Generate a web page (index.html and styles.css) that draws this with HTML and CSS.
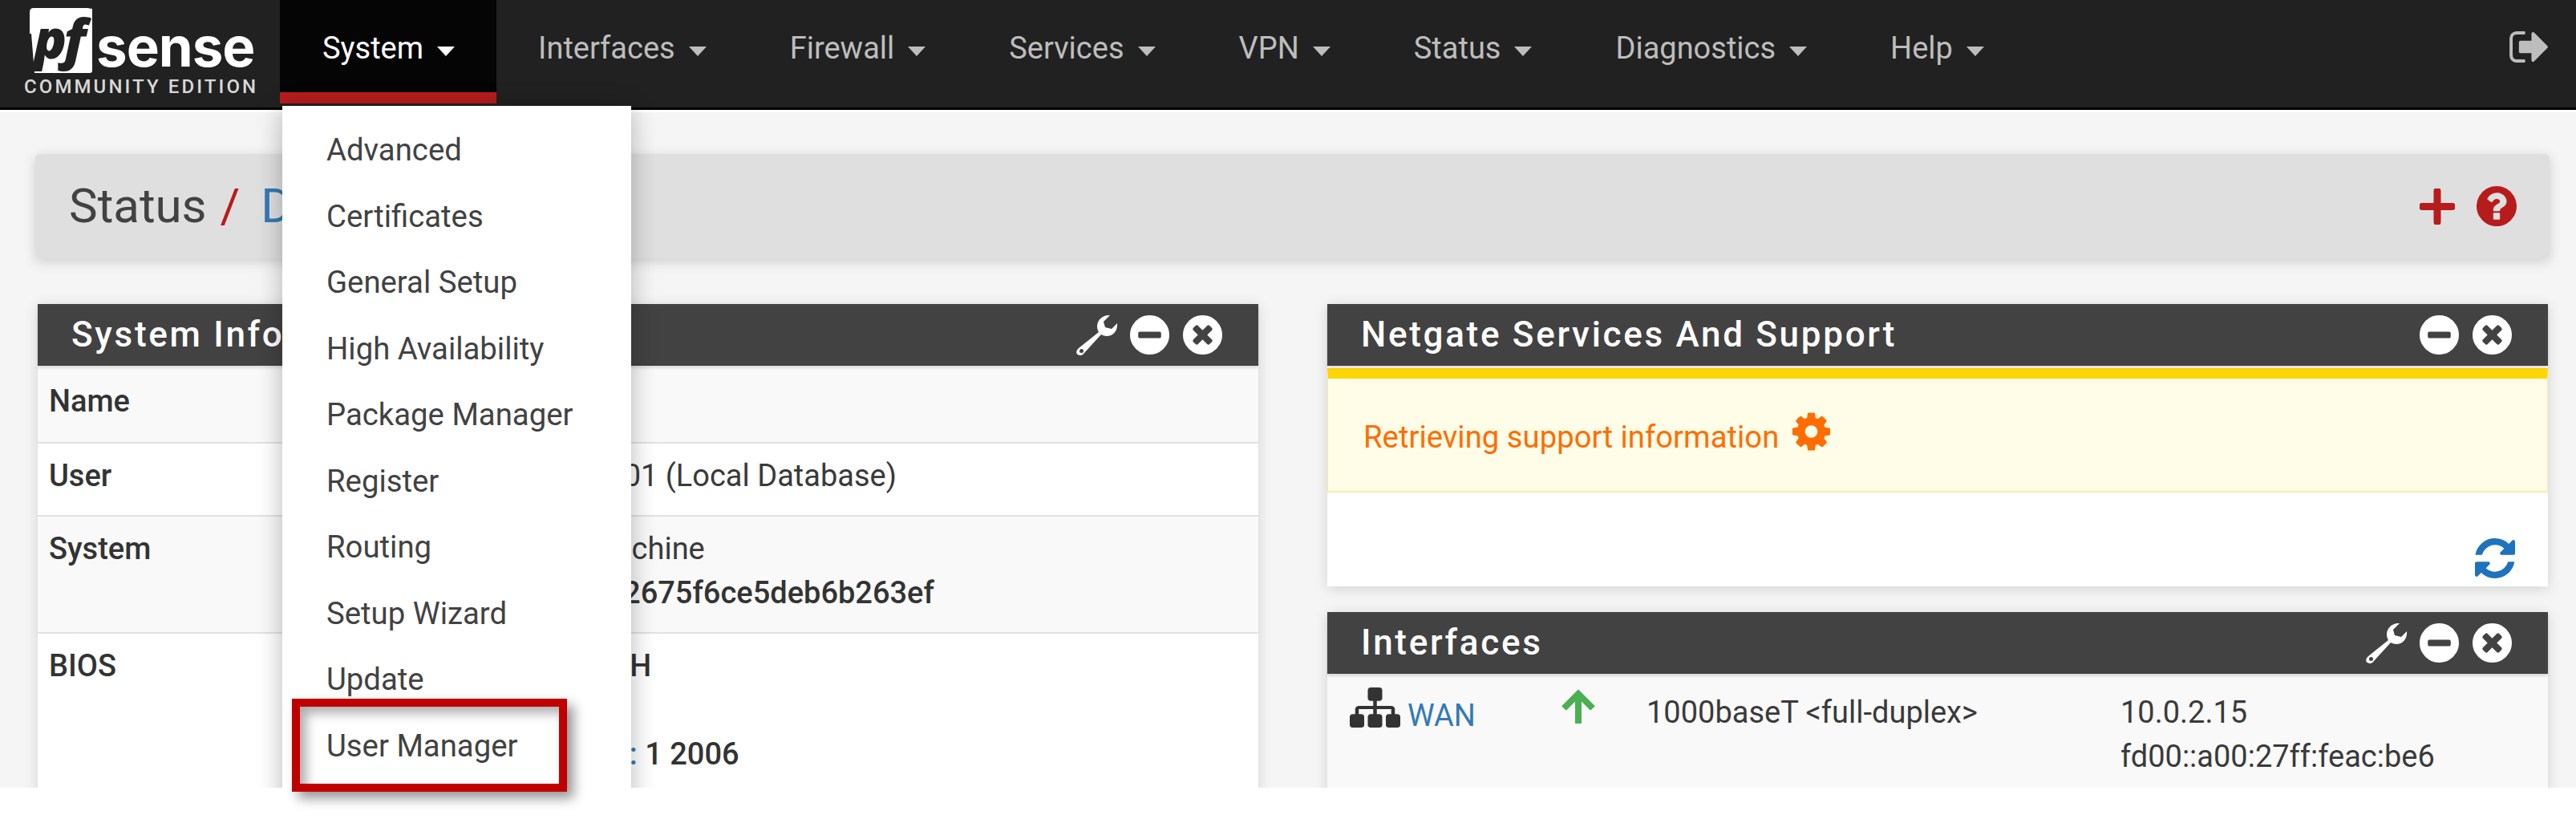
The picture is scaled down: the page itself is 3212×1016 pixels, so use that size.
FILE: index.html
```html
<!DOCTYPE html>
<html lang="en">
<head>
<meta charset="utf-8">
<title>pfSense - Status: Dashboard</title>
<link rel="stylesheet" href="styles.css">
</head>
<body>
<div class="root">
  <div class="page">
    <nav class="nav">
      <a class="logo">
        <svg class="logo-mark" viewBox="0 0 80 82" aria-hidden="true">
          <path class="logo-box" d="M5 0H72L78 1V78Q78 81 75 81H6L2 32H0V5Q0 0 5 0Z"/>
          <text class="logo-pf" x="5" y="63">pf</text>
        </svg>
        <span class="logo-word">sense</span>
        <span class="logo-ed">COMMUNITY EDITION</span>
      </a>
      <ul class="menu">
        <li class="menu-item active">System<i class="caret"></i></li>
        <li class="menu-item">Interfaces<i class="caret"></i></li>
        <li class="menu-item">Firewall<i class="caret"></i></li>
        <li class="menu-item">Services<i class="caret"></i></li>
        <li class="menu-item">VPN<i class="caret"></i></li>
        <li class="menu-item">Status<i class="caret"></i></li>
        <li class="menu-item">Diagnostics<i class="caret"></i></li>
        <li class="menu-item">Help<i class="caret"></i></li>
      </ul>
      <svg class="logout" viewBox="64 256 1632 1280" aria-hidden="true"><path d="M704 1440q0 4 1 20t.5 26.5-3 23.5-10 19.5-20.5 6.5h-320q-119 0-203.5-84.5t-84.5-203.5v-704q0-119 84.5-203.5t203.5-84.5h320q13 0 22.5 9.5t9.5 22.5q0 4 1 20t.5 26.5-3 23.5-10 19.5-20.5 6.5h-320q-66 0-113 47t-47 113v704q0 66 47 113t113 47h312l11.5 1 11.5 3 8 5.5 7 9 2 13.5zm928-544q0 26-19 45l-544 544q-19 19-45 19t-45-19-19-45v-288h-448q-26 0-45-19t-19-45v-384q0-26 19-45t45-19h448v-288q0-26 19-45t45-19 45 19l544 544q19 19 19 45z"/></svg>
    </nav>

    <main class="main">
      <header class="crumbs">
        <h1 class="crumb-title">Status<span class="crumb-sep">/</span><a class="crumb-link">Dashboard</a></h1>
        <div class="crumb-actions">
          <svg class="ico-plus" viewBox="0 0 44 45" aria-hidden="true"><path d="M22 3V42M3 22.5H41"/></svg>
          <svg class="ico-help" viewBox="128 128 1536 1536" aria-hidden="true"><path d="M1024 1376v-192q0-14-9-23t-23-9h-192q-14 0-23 9t-9 23v192q0 14 9 23t23 9h192q14 0 23-9t9-23zm256-672q0-88-55.5-163t-138.5-116-170-41q-243 0-371 213-15 24 8 42l132 100q7 6 19 6 16 0 25-12 53-68 86-92 34-24 86-24 48 0 85.5 26t37.5 59q0 38-20 61t-68 45q-63 28-115.5 86.5t-52.5 125.5v36q0 14 9 23t23 9h192q14 0 23-9t9-23q0-19 21.5-49.5t54.5-49.5q32-18 49-28.5t46-35 44.5-48 28-60.5 12.5-81zm384 192q0 209-103 385.5t-279.5 279.5-385.5 103-385.5-103-279.5-279.5-103-385.5 103-385.5 279.5-279.5 385.5-103 385.5 103 279.5 279.5 103 385.5z"/></svg>
        </div>
      </header>

      <div class="columns">
        <section class="panel">
          <div class="panel-head">
            <h2 class="panel-title">System Information</h2>
            <svg class="ico-wrench" viewBox="0 0 52 52" aria-hidden="true"><path class="wrench-shape" d="M42 1C33 0 26 7 26 15C26 18 27 20 28 22L3 42C-1 46 0 49 2 50C5 52 8 51 10 48L31 25C33 26 36 27 38 27C46 27 52 20 51 11L44 18L36 16L34 9Z"/><circle class="wrench-hole" cx="6.500" cy="45.500" r="2.500"/></svg>
            <svg class="ico-head" viewBox="128 128 1536 1536" aria-hidden="true"><path d="M1344 960v-128q0-26-19-45t-45-19h-768q-26 0-45 19t-19 45v128q0 26 19 45t45 19h768q26 0 45-19t19-45zm320-64q0 209-103 385.500t-279.500 279.500-385.500 103-385.500-103-279.500-279.500-103-385.500 103-385.500 279.500-279.500 385.500-103 385.500 103 279.500 279.500 103 385.500z"/></svg>
            <svg class="ico-head" viewBox="128 128 1536 1536" aria-hidden="true"><path d="M1277 1122q0-26-19-45l-181-181 181-181q19-19 19-45 0-27-19-46l-90-90q-19-19-46-19-26 0-45 19l-181 181-181-181q-19-19-45-19-27 0-46 19l-90 90q-19 19-19 46 0 26 19 45l181 181-181 181q-19 19-19 45 0 27 19 46l90 90q19 19 46 19 26 0 45-19l181-181 181 181q19 19 45 19 27 0 46-19l90-90q19-19 19-46zm387-226q0 209-103 385.500t-279.500 279.500-385.500 103-385.500-103-279.500-279.500-103-385.500 103-385.500 279.500-279.500 385.500-103 385.500 103 279.500 279.500 103 385.500z"/></svg>
          </div>
          <table class="info">
            <tr><th>Name</th><td>pfSense.home.arpa</td></tr>
            <tr><th>User</th><td>admin@192.168.1.101 (Local Database)</td></tr>
            <tr><th>System</th><td><span class="tuck">VirtualBox</span> Virtual Machine<br>Netgate Device ID: <b>a2675f6ce5deb6b263ef</b></td></tr>
            <tr><th>BIOS</th><td><span class="tuck">Vendor:</span> <b>innotek GmbH</b><br>Version: <b>VirtualBox</b><br><span class="tuck-wide">Release Date:</span> <b>Fri Dec<span class="info-link">:</span> 1 2006</b></td></tr>
          </table>
        </section>

        <div class="stack">
          <section class="panel">
            <div class="panel-head">
              <h2 class="panel-title">Netgate Services And Support</h2>
              <svg class="ico-head" viewBox="128 128 1536 1536" aria-hidden="true"><path d="M1344 960v-128q0-26-19-45t-45-19h-768q-26 0-45 19t-19 45v128q0 26 19 45t45 19h768q26 0 45-19t19-45zm320-64q0 209-103 385.500t-279.500 279.500-385.500 103-385.500-103-279.500-279.500-103-385.500 103-385.500 279.500-279.500 385.500-103 385.500 103 279.500 279.500 103 385.500z"/></svg>
              <svg class="ico-head" viewBox="128 128 1536 1536" aria-hidden="true"><path d="M1277 1122q0-26-19-45l-181-181 181-181q19-19 19-45 0-27-19-46l-90-90q-19-19-46-19-26 0-45 19l-181 181-181-181q-19-19-45-19-27 0-46 19l-90 90q-19 19-19 46 0 26 19 45l181 181-181 181q-19 19-19 45 0 27 19 46l90 90q19 19 46 19 26 0 45-19l181-181 181 181q19 19 45 19 27 0 46-19l90-90q19-19 19-46zm387-226q0 209-103 385.500t-279.500 279.500-385.500 103-385.500-103-279.500-279.500-103-385.500 103-385.500 279.500-279.500 385.500-103 385.500 103 279.500 279.500 103 385.500z"/></svg>
            </div>
            <div class="alert">
              <span class="alert-text">Retrieving support information</span>
              <svg class="ico-gear" viewBox="128 128 1536 1536" aria-hidden="true"><path d="M1152 896q0-106-75-181t-181-75-181 75-75 181 75 181 181 75 181-75 75-181zm512-109v222q0 12-8 23t-20 13l-185 28q-19 54-39 91 35 50 107 138 10 12 10 25t-9 23q-27 37-99 108t-94 71q-12 0-26-9l-138-108q-44 23-91 38-16 136-29 186-7 28-36 28h-222q-14 0-24.500-8.500t-11.500-21.500l-28-184q-49-16-90-37l-141 107q-10 9-25 9-14 0-25-11-126-114-165-168-7-10-7-23 0-12 8-23 15-21 51-66.500t54-70.500q-27-50-41-99l-183-27q-13-2-21-12.500t-8-23.500v-222q0-12 8-23t19-13l186-28q14-46 39-92-40-57-107-138-10-12-10-24 0-10 9-23 26-36 98.500-107.500t94.500-71.500q13 0 26 10l138 107q44-23 91-38 16-136 29-186 7-28 36-28h222q14 0 24.500 8.500t11.500 21.500l28 184q49 16 90 37l142-107q9-9 24-9 13 0 25 10 129 119 165 170 7 8 7 22 0 12-8 23-15 21-51 66.500t-54 70.500q26 50 41 98l183 28q13 2 21 12.500t8 23.500z"/></svg>
            </div>
            <div class="panel-foot">
              <svg class="ico-refresh" viewBox="128 128 1536 1536" aria-hidden="true"><path d="M1639 1056q0 5-1 7-64 268-268 434.500t-478 166.500q-146 0-282.500-55t-243.500-157l-129 129q-19 19-45 19t-45-19-19-45v-448q0-26 19-45t45-19h448q26 0 45 19t19 45-19 45l-137 137q71 66 161 102t187 36q134 0 250-65t186-179q11-17 53-117 8-23 30-23h192q13 0 22.500 9.500t9.500 22.500zm25-800v448q0 26-19 45t-45 19h-448q-26 0-45-19t-19-45 19-45l138-138q-148-137-349-137-134 0-250 65t-186 179q-11 17-53 117-8 23-30 23h-199q-13 0-22.500-9.500t-9.500-22.500v-7q65-268 270-434.500t480-166.500q146 0 284 55.500t245 156.500l130-129q19-19 45-19t45 19 19 45z"/></svg>
            </div>
          </section>

          <section class="panel panel-fill">
            <div class="panel-head">
              <h2 class="panel-title">Interfaces</h2>
              <svg class="ico-wrench" viewBox="0 0 52 52" aria-hidden="true"><path class="wrench-shape" d="M42 1C33 0 26 7 26 15C26 18 27 20 28 22L3 42C-1 46 0 49 2 50C5 52 8 51 10 48L31 25C33 26 36 27 38 27C46 27 52 20 51 11L44 18L36 16L34 9Z"/><circle class="wrench-hole" cx="6.500" cy="45.500" r="2.500"/></svg>
              <svg class="ico-head" viewBox="128 128 1536 1536" aria-hidden="true"><path d="M1344 960v-128q0-26-19-45t-45-19h-768q-26 0-45 19t-19 45v128q0 26 19 45t45 19h768q26 0 45-19t19-45zm320-64q0 209-103 385.500t-279.500 279.500-385.500 103-385.500-103-279.500-279.500-103-385.500 103-385.500 279.500-279.500 385.500-103 385.500 103 279.500 279.500 103 385.500z"/></svg>
              <svg class="ico-head" viewBox="128 128 1536 1536" aria-hidden="true"><path d="M1277 1122q0-26-19-45l-181-181 181-181q19-19 19-45 0-27-19-46l-90-90q-19-19-46-19-26 0-45 19l-181 181-181-181q-19-19-45-19-27 0-46 19l-90 90q-19 19-19 46 0 26 19 45l181 181-181 181q-19 19-19 45 0 27 19 46l90 90q19 19 46 19 26 0 45-19l181-181 181 181q19 19 45 19 27 0 46-19l90-90q19-19 19-46zm387-226q0 209-103 385.500t-279.500 279.500-385.500 103-385.500-103-279.500-279.500-103-385.500 103-385.500 279.500-279.500 385.500-103 385.500 103 279.500 279.500 103 385.500z"/></svg>
            </div>
            <div class="if-row">
              <div class="if-name">
                <svg class="ico-sitemap" viewBox="0 128 1792 1536" preserveAspectRatio="none" aria-hidden="true"><path d="M1792 1248v320q0 40-28 68t-68 28h-320q-40 0-68-28t-28-68v-320q0-40 28-68t68-28h96v-192h-512v192h96q40 0 68 28t28 68v320q0 40-28 68t-68 28h-320q-40 0-68-28t-28-68v-320q0-40 28-68t68-28h96v-192h-512v192h96q40 0 68 28t28 68v320q0 40-28 68t-68 28h-320q-40 0-68-28t-28-68v-320q0-40 28-68t68-28h96v-192q0-52 38-90t90-38h512v-192h-96q-40 0-68-28t-28-68v-320q0-40 28-68t68-28h320q40 0 68 28t28 68v320q0 40-28 68t-68 28h-96v192h512q52 0 90 38t38 90v192h96q40 0 68 28t28 68z"/></svg>
                <a class="if-link">WAN</a>
              </div>
              <svg class="ico-up" viewBox="0 0 44 45" aria-hidden="true"><path d="M22 42V5M4 23L22 5L40 23"/></svg>
              <div class="if-media">1000baseT &lt;full-duplex&gt;</div>
              <div class="if-addr">10.0.2.15<br>fd00::a00:27ff:feac:be6</div>
            </div>
          </section>
        </div>
      </div>
    </main>

    <ul class="dropdown">
      <li>Advanced</li>
      <li>Certificates</li>
      <li>General Setup</li>
      <li>High Availability</li>
      <li>Package Manager</li>
      <li>Register</li>
      <li>Routing</li>
      <li>Setup Wizard</li>
      <li>Update</li>
      <li>User Manager</li>
    </ul>
  </div>
  <div class="callout"></div>
</div>
</body>
</html>
```
FILE: styles.css
```css
* { box-sizing: border-box; }
html, body { margin: 0; padding: 0; background: #fff; }
body { font-family: Roboto, "Liberation Sans", sans-serif; font-size: 38px; line-height: 55px; color: #3a3a3a; }
ul { list-style: none; margin: 0; padding: 0; }
h1, h2 { margin: 0; font-weight: 400; }
svg { display: block; flex: none; }

.root { position: relative; width: 3212px; height: 1016px; overflow: hidden; background: #fff; }
.page { position: relative; height: 982px; overflow: hidden; background: #f5f5f5; }

/* top bar */
.nav { display: flex; align-items: flex-start; height: 140px; background: #212121; border-bottom: 3px solid #fff; box-shadow: inset 0 -3px 0 #000; }
.logo { position: relative; flex: none; width: 349px; height: 134px; }
.logo-mark { position: absolute; left: 37px; top: 10px; width: 80px; height: 82px; }
.logo-box { fill: #fff; }
.logo-pf { font-family: "Open Sans", sans-serif; font-weight: 800; font-style: italic; font-size: 68px; fill: #212121; letter-spacing: -4px; }
.logo-word { position: absolute; left: 120px; top: 18px; font-family: Inter, sans-serif; font-weight: 700; font-size: 69px; line-height: 80px; color: #fff; letter-spacing: -1px; }
.logo-ed { position: absolute; left: 30px; top: 93px; font-family: Roboto, sans-serif; font-weight: 500; font-size: 24px; line-height: 30px; color: #d8d8d8; letter-spacing: 3.1px; white-space: nowrap; }

.menu { display: flex; height: 129px; }
.menu-item { display: flex; align-items: flex-start; height: 129px; padding: 33px 52px 0; color: #bdbdbd; border-bottom: 14px solid transparent; white-space: nowrap; }
.menu-item.active { padding: 33px 52px 0 53px; color: #fff; background: #050505; border-bottom-color: #b71c1c; }
.caret { width: 0; height: 0; margin: 25px 0 0 17px; border-left: 11px solid transparent; border-right: 11px solid transparent; border-top: 12px solid currentColor; }
.logout { width: 52px; height: 39px; margin: 39px 32px 0 auto; fill: #bdbdbd; }

/* breadcrumb bar */
.main { padding: 52px 33px 0 44px; }
.crumbs { display: flex; align-items: center; justify-content: space-between; height: 130px; padding: 0 41px 0 42px; background: #dfdfdf; border-radius: 5px; box-shadow: 0 4px 16px rgba(0, 0, 0, .16); }
.crumb-title { font-size: 60px; line-height: 70px; color: #424242; }
.crumb-sep { margin: 0 26px 0 17px; color: #b71c1c; }
.crumb-link { color: #337ab7; }
.crumb-actions { display: flex; align-items: center; gap: 27px; }
.ico-plus { width: 44px; height: 45px; fill: none; stroke: #b71c1c; stroke-width: 9; stroke-linecap: round; }
.ico-help { width: 50px; height: 50px; fill: #b71c1c; }

/* panels */
.columns { display: grid; grid-template-columns: 1522px 1522px; gap: 86px; margin: 57px 0 0 3px; }
.stack { display: flex; flex-direction: column; gap: 32px; }
.panel { background: #fff; box-shadow: 0 3px 16px rgba(0, 0, 0, .14); }
.panel-head { position: relative; display: flex; align-items: center; gap: 17px; height: 77px; padding: 0 45px 0 42px; background: #424242; box-shadow: 0 3px 3px rgba(0, 0, 0, .12); }
.panel-title { flex: 1; font-size: 44px; font-weight: 500; line-height: 77px; letter-spacing: 2.7px; color: #fff; }
.ico-head { width: 49px; height: 49px; fill: #fff; }
.ico-wrench { width: 52px; height: 52px; margin-right: -2px; }
.wrench-shape { fill: #fff; }
.wrench-hole { fill: #424242; }

/* system info */
.info { width: 100%; margin-top: 2px; border-collapse: collapse; table-layout: fixed; }
.info tr { border-top: 2px solid #e2e2e2; }
.info tr:first-child { border-top: 0; }
.info tr:nth-child(odd) { background: #f9f9f9; }
.info th, .info td { padding: 13px 14px 21px; vertical-align: top; text-align: left; }
.info tr:first-child th, .info tr:first-child td { padding: 15px 14px 23px; }
.info th { width: 376px; font-weight: 500; color: #333; }
.info b { font-weight: 500; color: #333; }
.info-link { color: #337ab7; }
.tuck { margin-right: -7px; }
.tuck-wide { margin-right: -10px; }

/* support notice */
.alert { display: flex; align-items: center; gap: 17px; height: 155px; margin-top: 3px; padding: 4px 44px 0; color: #ff6d00; font-size: 38.300px; background: #fffde7; border: 1px solid #ffe9b0; border-top: 13px solid #ffd600; border-bottom-width: 2px; }
.ico-gear { width: 47px; height: 48px; margin-top: -12px; fill: #ff6d00; }
.panel-foot { display: flex; justify-content: flex-end; height: 117px; padding: 57px 41px 0 0; }
.ico-refresh { width: 50px; height: 50px; fill: #1e73be; }

/* interfaces */
.panel-fill { flex: 1; background: #f9f9f9; }
.if-row { display: grid; grid-template-columns: 263px 107px 591px auto; padding: 21px 0 0 28px; }
.if-name { display: flex; align-items: flex-start; gap: 9px; }
.ico-sitemap { width: 63px; height: 50px; margin-top: -4px; fill: #333; }
.if-link { color: #337ab7; margin-top: 4px; }
.ico-up { width: 44px; height: 45px; margin-top: -1px; fill: none; stroke: #4caf50; stroke-width: 8; stroke-linejoin: miter; }

/* open menu */
.dropdown { position: absolute; left: 352px; top: 132px; width: 435px; padding-top: 14px; height: 900px; background: #fff; box-shadow: 0 4px 30px rgba(0, 0, 0, .28); }
.dropdown li { height: 82.500px; padding-left: 55px; font-size: 38.300px; line-height: 82.500px; color: #424242; }

/* annotation */
.callout { position: absolute; left: 364px; top: 871px; width: 343px; height: 116px; border: 10px solid #c00000; box-shadow: 8px 8px 14px rgba(0, 0, 0, .42), inset 8px 8px 14px rgba(0, 0, 0, .32); }
```
